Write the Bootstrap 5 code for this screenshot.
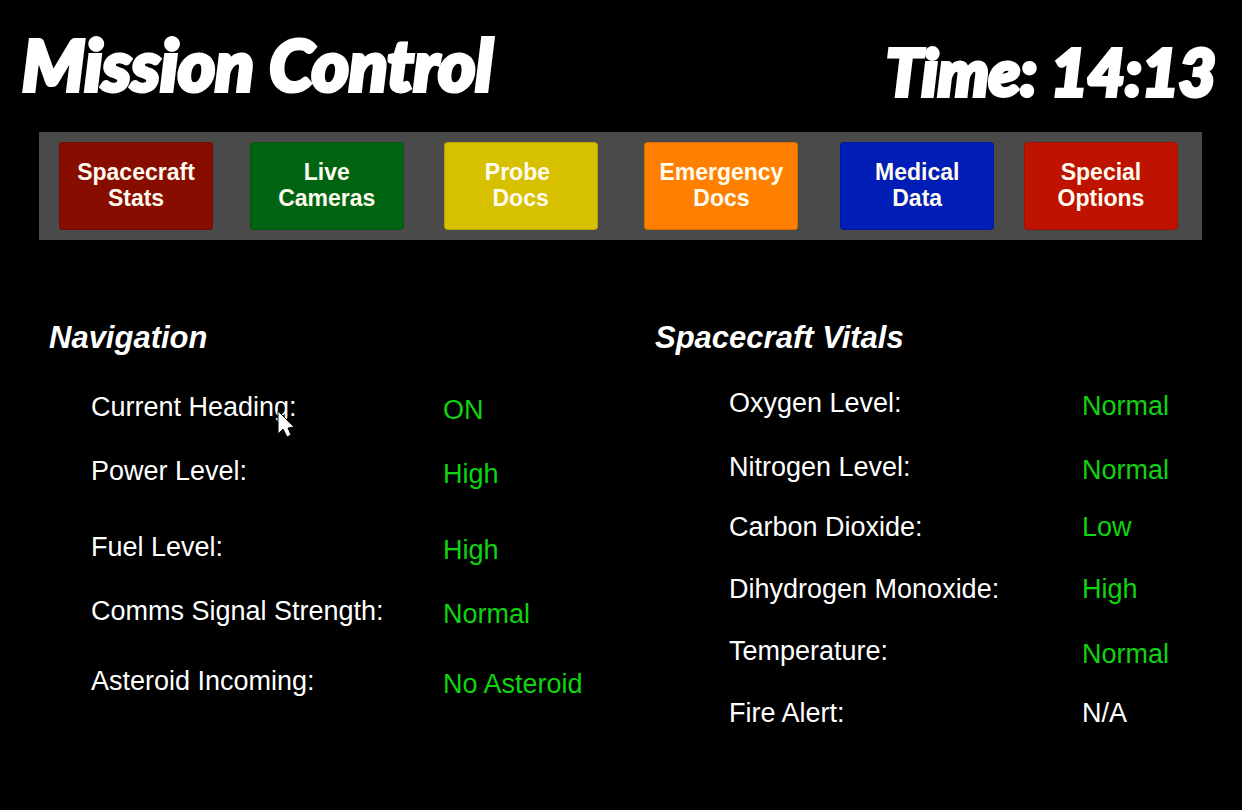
<!DOCTYPE html>
<html lang="en">
<head>
<meta charset="utf-8">
<meta name="viewport" content="width=device-width, initial-scale=1">
<title>Mission Control</title>
<link href="https://cdn.jsdelivr.net/npm/bootstrap@5.3.0/dist/css/bootstrap.min.css" rel="stylesheet">
<style>
  body { background: #000; color: #fff; font-family: "Liberation Sans", Arial, sans-serif; }
  .masthead { padding: 22px 26px 0 22px; font-family: Lato, sans-serif; font-style: italic; font-weight: 900; line-height: 84px; -webkit-text-stroke: 4px #fff; }
  .masthead h1 { font: inherit; font-size: 71px; line-height: 84px; }
  .clock { padding-top: 8px; font-size: 64px; }
  .control-bar { display: grid; grid-template-columns: 191fr 194fr 201fr 196fr 184fr 153fr; margin: 18px 40px 0 39px; padding: 10px 24px 10px 20px; background: #4a4a4a; }
  .control-bar .btn { --bs-btn-color: #fffbee; --bs-btn-hover-color: #fff; width: 154px; height: 88px; padding: 0 0 2px; border: 1px solid rgba(0,0,0,.15); border-radius: 4px; font-size: 23px; font-weight: 700; line-height: 26px; background: var(--tone); }
  .tone-maroon { --tone: #870d00; }
  .tone-green { --tone: #006412; }
  .tone-yellow { --tone: #d7c000; }
  .tone-orange { --tone: #ff8000; }
  .tone-blue { --tone: #001db5; }
  .tone-red { --tone: #bd1300; }
  .panels { padding: 78px 40px 40px 49px; }
  .panel-left { flex: 0 1 606px; }
  .panel-right { flex: 1 1 0; }
  .panels h2 { margin: 0; font-size: 31px; font-weight: 700; font-style: italic; line-height: 40px; }
  .readings { font-size: 27px; line-height: 32px; }
  .readings th, .readings td { padding: 0; font-weight: 400; vertical-align: top; white-space: nowrap; }
  .readings td { padding-top: 3px; color: #0fd40f; }
  .readings td.level { padding-top: 0; }
  .readings td.idle { color: #fff; }
  .panel-left .readings { margin: 33px 0 0 42px; }
  .panel-left th { width: 352px; }
  .panel-right .readings { margin: 29px 0 0 74px; }
  .panel-right th { width: 353px; }
  .step-sm { height: 60px; }
  .step-md { height: 62px; }
  .step-lg { height: 64px; }
  .step-xl { height: 70px; }
  .step-xxl { height: 76px; }
  .pointer { left: 186px; top: 18px; }
</style>
</head>
<body>
<header class="masthead d-flex justify-content-between">
  <h1 class="m-0">Mission Control</h1>
  <div class="clock">Time: 14:13</div>
</header>
<nav class="control-bar" aria-label="Sections">
  <button type="button" class="btn tone-maroon">Spacecraft<br>Stats</button>
  <button type="button" class="btn tone-green">Live<br>Cameras</button>
  <button type="button" class="btn tone-yellow">Probe&nbsp;<br>Docs</button>
  <button type="button" class="btn tone-orange">Emergency<br>Docs</button>
  <button type="button" class="btn tone-blue">Medical<br>Data</button>
  <button type="button" class="btn tone-red">Special<br>Options</button>
</nav>
<main class="panels d-flex">
  <section class="panel-left">
    <h2>Navigation</h2>
    <table class="readings">
      <tr class="step-lg"><th scope="row"><span class="position-relative">Current Heading:<svg class="pointer position-absolute" width="18" height="28" viewBox="0 0 18 28" aria-hidden="true"><path d="M1 1V24L6 19L10 27L14 25L11 18L17 17Z" fill="#fff" stroke="#000" stroke-width="1"/></svg></span></th><td>ON</td></tr>
      <tr class="step-xxl"><th scope="row">Power Level:</th><td>High</td></tr>
      <tr class="step-lg"><th scope="row">Fuel Level:</th><td>High</td></tr>
      <tr class="step-xl"><th scope="row">Comms Signal Strength:</th><td>Normal</td></tr>
      <tr><th scope="row">Asteroid Incoming:</th><td>No Asteroid</td></tr>
    </table>
  </section>
  <section class="panel-right">
    <h2>Spacecraft Vitals</h2>
    <table class="readings">
      <tr class="step-lg"><th scope="row">Oxygen Level:</th><td>Normal</td></tr>
      <tr class="step-sm"><th scope="row">Nitrogen Level:</th><td>Normal</td></tr>
      <tr class="step-md"><th scope="row">Carbon Dioxide:</th><td class="level">Low</td></tr>
      <tr class="step-md"><th scope="row">Dihydrogen Monoxide:</th><td class="level">High</td></tr>
      <tr class="step-md"><th scope="row">Temperature:</th><td>Normal</td></tr>
      <tr><th scope="row">Fire Alert:</th><td class="level idle">N/A</td></tr>
    </table>
  </section>
</main>
<script src="https://cdn.jsdelivr.net/npm/bootstrap@5.3.0/dist/js/bootstrap.bundle.min.js"></script>
</body>
</html>
